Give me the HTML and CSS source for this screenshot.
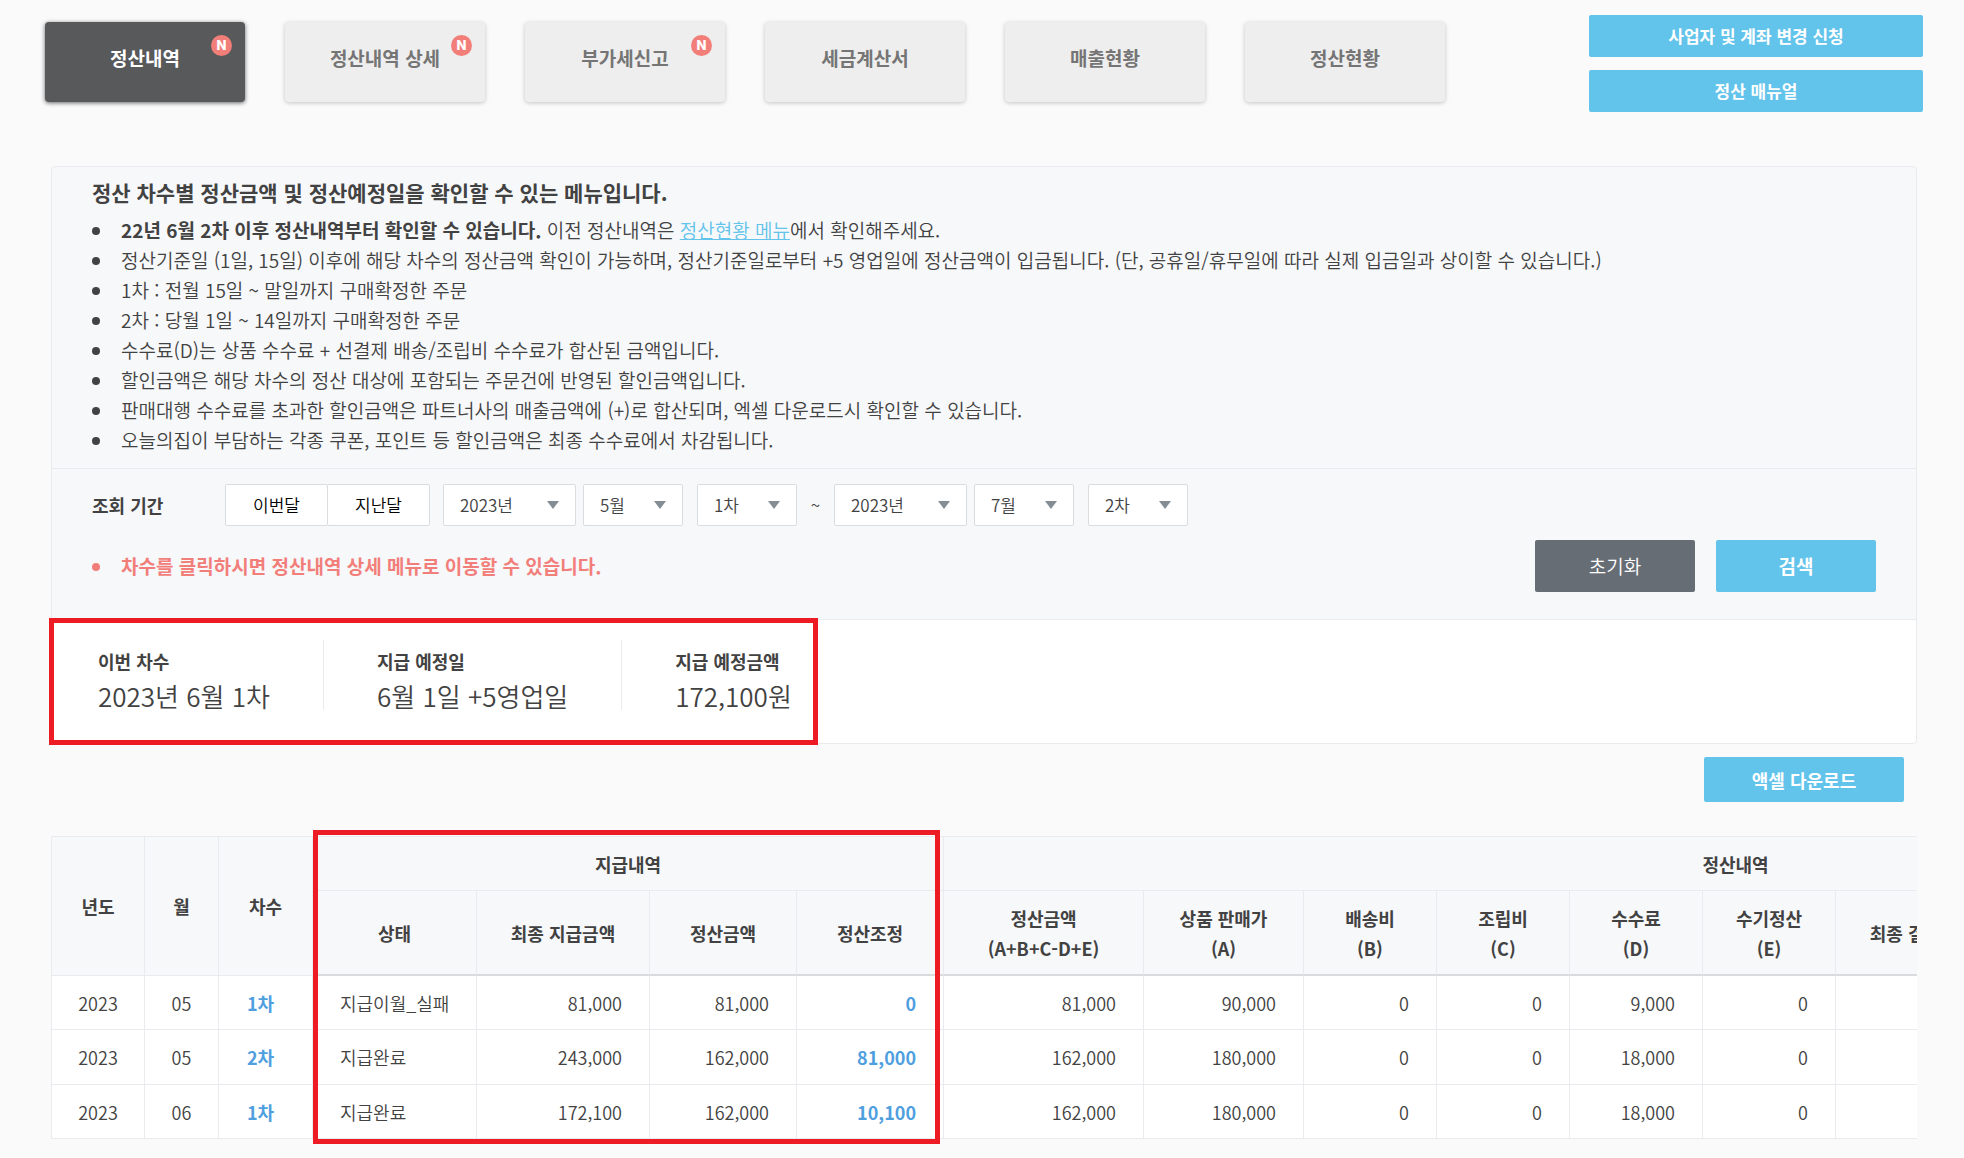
FILE: index.html
```html
<!DOCTYPE html>
<html lang="ko">
<head>
<meta charset="utf-8">
<meta name="viewport" content="width=device-width, initial-scale=1">
<title>정산내역</title>
<link rel="stylesheet" href="styles.css">
</head>
<body>
<header class="top">
  <nav class="tabs">
    <a class="tab tab-active" href="#">정산내역<span class="badge">N</span></a>
    <a class="tab" href="#">정산내역 상세<span class="badge">N</span></a>
    <a class="tab" href="#">부가세신고<span class="badge">N</span></a>
    <a class="tab" href="#">세금계산서</a>
    <a class="tab" href="#">매출현황</a>
    <a class="tab" href="#">정산현황</a>
  </nav>
  <div class="top-actions">
    <button class="btn btn-primary btn-wide" type="button">사업자 및 계좌 변경 신청</button>
    <button class="btn btn-primary btn-wide" type="button">정산 매뉴얼</button>
  </div>
</header>

<main class="content">
  <section class="panel">
    <div class="guide">
      <h1 class="guide-title">정산 차수별 정산금액 및 정산예정일을 확인할 수 있는 메뉴입니다.</h1>
      <ul class="notes">
        <li><strong>22년 6월 2차 이후 정산내역부터 확인할 수 있습니다.</strong> 이전 정산내역은 <a class="link" href="#">정산현황 메뉴</a>에서 확인해주세요.</li>
        <li>정산기준일 (1일, 15일) 이후에 해당 차수의 정산금액 확인이 가능하며, 정산기준일로부터 +5 영업일에 정산금액이 입금됩니다. (단, 공휴일/휴무일에 따라 실제 입금일과 상이할 수 있습니다.)</li>
        <li>1차 : 전월 15일 ~ 말일까지 구매확정한 주문</li>
        <li>2차 : 당월 1일 ~ 14일까지 구매확정한 주문</li>
        <li>수수료(D)는 상품 수수료 + 선결제 배송/조립비 수수료가 합산된 금액입니다.</li>
        <li>할인금액은 해당 차수의 정산 대상에 포함되는 주문건에 반영된 할인금액입니다.</li>
        <li>판매대행 수수료를 초과한 할인금액은 파트너사의 매출금액에 (+)로 합산되며, 엑셀 다운로드시 확인할 수 있습니다.</li>
        <li>오늘의집이 부담하는 각종 쿠폰, 포인트 등 할인금액은 최종 수수료에서 차감됩니다.</li>
      </ul>
    </div>

    <form class="search">
      <div class="period" role="group" aria-labelledby="period-label">
        <span class="period-label" id="period-label">조회 기간</span>
        <div class="segment">
          <button type="button">이번달</button>
          <button type="button">지난달</button>
        </div>
        <div class="range">
          <span class="select select-year"><select aria-label="시작 연도"><option>2023년</option></select></span>
          <span class="select"><select aria-label="시작 월"><option>5월</option></select></span>
          <span class="select select-round"><select aria-label="시작 차수"><option>1차</option></select></span>
        </div>
        <span class="tilde">~</span>
        <div class="range">
          <span class="select select-year"><select aria-label="종료 연도"><option>2023년</option></select></span>
          <span class="select"><select aria-label="종료 월"><option>7월</option></select></span>
          <span class="select select-round"><select aria-label="종료 차수"><option>2차</option></select></span>
        </div>
      </div>
      <div class="search-foot">
        <ul class="notes notes-alert">
          <li>차수를 클릭하시면 정산내역 상세 메뉴로 이동할 수 있습니다.</li>
        </ul>
        <div class="search-actions">
          <button class="btn btn-dark" type="reset">초기화</button>
          <button class="btn btn-primary" type="submit">검색</button>
        </div>
      </div>
    </form>

    <div class="summary">
      <dl class="summary-list">
        <div class="summary-item"><dt>이번 차수</dt><dd>2023년 6월 1차</dd></div>
        <div class="summary-item"><dt>지급 예정일</dt><dd>6월 1일 +5영업일</dd></div>
        <div class="summary-item"><dt>지급 예정금액</dt><dd>172,100원</dd></div>
      </dl>
    </div>
  </section>

  <div class="table-tools">
    <button class="btn btn-primary btn-excel" type="button">액셀 다운로드</button>
  </div>

  <div class="table-area">
    <div class="table-scroll">
      <table class="grid">
        <colgroup>
          <col class="w-year"><col class="w-month"><col class="w-round">
          <col class="w-status"><col class="w-final"><col class="w-pay"><col class="w-pay">
          <col class="w-total"><col class="w-price"><col class="w-fee"><col class="w-fee"><col class="w-fee"><col class="w-fee"><col class="w-final"><col>
        </colgroup>
        <thead>
          <tr class="head-groups">
            <th rowspan="2">년도</th><th rowspan="2">월</th><th rowspan="2">차수</th>
            <th colspan="4">지급내역</th><th colspan="8">정산내역</th>
          </tr>
          <tr class="head-cols">
            <th>상태</th><th>최종 지급금액</th><th>정산금액</th><th>정산조정</th>
            <th>정산금액<br>(A+B+C-D+E)</th><th>상품 판매가<br>(A)</th><th>배송비<br>(B)</th><th>조립비<br>(C)</th><th>수수료<br>(D)</th><th>수기정산<br>(E)</th><th>최종 결제금액</th><th></th>
          </tr>
        </thead>
        <tbody>
          <tr><td class="mid">2023</td><td class="mid">05</td><td class="mid round"><a href="#">1차</a></td><td class="left">지급이월_실패</td><td>81,000</td><td>81,000</td><td><a href="#">0</a></td><td>81,000</td><td>90,000</td><td>0</td><td>0</td><td>9,000</td><td>0</td><td></td><td></td></tr>
          <tr><td class="mid">2023</td><td class="mid">05</td><td class="mid round"><a href="#">2차</a></td><td class="left">지급완료</td><td>243,000</td><td>162,000</td><td><a href="#">81,000</a></td><td>162,000</td><td>180,000</td><td>0</td><td>0</td><td>18,000</td><td>0</td><td></td><td></td></tr>
          <tr><td class="mid">2023</td><td class="mid">06</td><td class="mid round"><a href="#">1차</a></td><td class="left">지급완료</td><td>172,100</td><td>162,000</td><td><a href="#">10,100</a></td><td>162,000</td><td>180,000</td><td>0</td><td>0</td><td>18,000</td><td>0</td><td></td><td></td></tr>
        </tbody>
      </table>
    </div>
    <div class="highlight"></div>
  </div>
</main>
</body>
</html>
```
FILE: styles.css
```css
* { box-sizing: border-box; }

body {
  margin: 0;
  background: #fafafa;
  color: #424242;
  font-family: "Noto Sans CJK KR", "Noto Sans", sans-serif;
  font-size: 18px;
  font-weight: 350;
  line-height: 30px;
}

ul, dl, dd, h1 { margin: 0; padding: 0; }
button, select { font: inherit; cursor: pointer; }

/* top navigation */
.top {
  display: flex;
  justify-content: space-between;
  gap: 40px;
  padding: 15px 41px 0 45px;
}
.tabs { display: flex; gap: 40px; padding-top: 7px; }
.tab {
  position: relative;
  display: flex;
  align-items: center;
  justify-content: center;
  width: 200px;
  height: 80px;
  padding-bottom: 8px;
  border-radius: 4px;
  background: #eee;
  box-shadow: 0 1px 4px rgba(0, 0, 0, .22);
  color: #757575;
  font-size: 19px;
  font-weight: 700;
  text-decoration: none;
}
.tab-active {
  background: #58595b;
  box-shadow: 0 1px 4px rgba(0, 0, 0, .6);
  color: #fff;
}
.badge {
  position: absolute;
  top: 13px;
  right: 13px;
  width: 21px;
  height: 21px;
  border-radius: 50%;
  background: #f27e7a;
  color: #fff;
  font-family: Inter, sans-serif;
  font-size: 13px;
  font-weight: 800;
  line-height: 21px;
  text-align: center;
}

/* buttons */
.btn {
  padding: 0;
  border: 0;
  border-radius: 2px;
  color: #fff;
}
.btn-primary { background: #62c3eb; font-weight: 700; }
.btn-dark { background: #676d74; }
.top-actions { display: flex; flex-direction: column; gap: 13px; width: 334px; }
.btn-wide { height: 42px; font-size: 17px; }

.content { padding: 54px 47px 20px 51px; }

/* guide panel */
.panel {
  border: 1px solid #e9ebee;
  border-radius: 4px;
  background: #f7f8fa;
}
.guide { padding: 10px 40px 13px; }
.guide-title { margin-bottom: 8px; font-size: 21px; font-weight: 700; line-height: 30px; }
.notes { list-style: none; font-size: 19px; }
.notes li { position: relative; padding-left: 29px; }
.notes li::before {
  content: "";
  position: absolute;
  top: 12px;
  left: 0;
  width: 8px;
  height: 8px;
  border-radius: 50%;
  background: currentColor;
}
.notes strong { font-weight: 700; }
.notes-alert { color: #f27e7a; font-weight: 700; }
.link { color: #62c3eb; text-decoration: underline; }

/* search form */
.search { padding: 15px 40px 27px; border-top: 1px solid #e9ebee; }
.period { display: flex; align-items: center; font-size: 17px; }
.period-label { width: 133px; font-size: 18px; font-weight: 700; }
.segment { display: flex; margin-right: 13px; }
.segment button {
  width: 103px;
  height: 42px;
  padding: 0;
  border: 1px solid #dadde0;
  border-radius: 2px;
  background: #fff;
  color: #000;
}
.segment button + button { margin-left: -1px; }
.range { display: flex; gap: 7px; }
.select { position: relative; width: 100px; }
.select-year { width: 133px; }
.select-round { margin-left: 7px; }
.select select {
  display: block;
  width: 100%;
  height: 42px;
  padding: 0 32px 0 16px;
  border: 1px solid #dadde0;
  border-radius: 2px;
  background: #fff;
  color: #424242;
  appearance: none;
}
.select::after {
  content: "";
  position: absolute;
  top: 17px;
  right: 17px;
  border: 6px solid transparent;
  border-top: 8px solid #848c94;
  border-bottom: 0;
  pointer-events: none;
}
.tilde { width: 37px; text-align: center; }
.search-foot {
  display: flex;
  align-items: center;
  justify-content: space-between;
  margin-top: 14px;
}
.search-actions { display: flex; gap: 21px; }
.search-actions .btn { width: 160px; height: 52px; font-size: 19px; }

/* payment summary */
.summary {
  border-top: 1px solid #e9ebee;
  border-radius: 0 0 4px 4px;
  background: #fff;
}
.summary-list {
  position: relative;
  display: inline-flex;
  padding: 20px 26px 33px 46px;
  vertical-align: top;
}
.summary-list::after,
.highlight {
  content: "";
  position: absolute;
  border: 5px solid #ed1c24;
  pointer-events: none;
}
.summary-list::after { inset: -2px 0 -2px -3px; }
.summary-item + .summary-item {
  margin-left: 53px;
  padding-left: 53px;
  border-left: 1px solid #e9ebee;
}
.summary-item dt { padding-top: 8px; font-weight: 700; line-height: 26px; }
.summary-item dd { margin-top: 8px; font-size: 26px; line-height: 28px; }

/* settlement table */
.table-tools { display: flex; justify-content: flex-end; padding: 13px 13px 34px 0; }
.btn-excel { width: 200px; height: 45px; }
.table-area { position: relative; }
.table-scroll {
  overflow: hidden;
  border-top: 1px solid #e9ebee;
  border-left: 1px solid #e9ebee;
}
.highlight { top: -6px; bottom: -5px; left: 262px; width: 627px; }
.grid {
  width: 2476px;
  table-layout: fixed;
  border-spacing: 0;
  background: #fff;
}
.grid th, .grid td {
  padding: 0 27px;
  border-right: 1px solid #e9ebee;
  border-bottom: 1px solid #e9ebee;
}
.grid th { padding: 0; background: #f7f8fa; font-weight: 700; }
.head-groups { height: 54px; }
.head-cols { height: 85px; }
.grid .head-cols th { border-bottom: 2px solid #d9dbde; }
.grid tbody tr { height: 54px; }
.grid tbody tr:nth-child(2) { height: 55px; }
.grid td { text-align: right; white-space: nowrap; }
.grid .mid { padding: 0; text-align: center; }
.grid .round { padding-right: 10px; }
.grid .left { text-align: left; }
.grid a { color: #4f9fdf; font-weight: 700; text-decoration: none; }
.w-year { width: 93px; }
.w-month { width: 74px; }
.w-round { width: 94px; }
.w-status { width: 164px; }
.w-final { width: 173px; }
.w-pay { width: 147px; }
.w-total { width: 200px; }
.w-price { width: 160px; }
.w-fee { width: 133px; }
```
